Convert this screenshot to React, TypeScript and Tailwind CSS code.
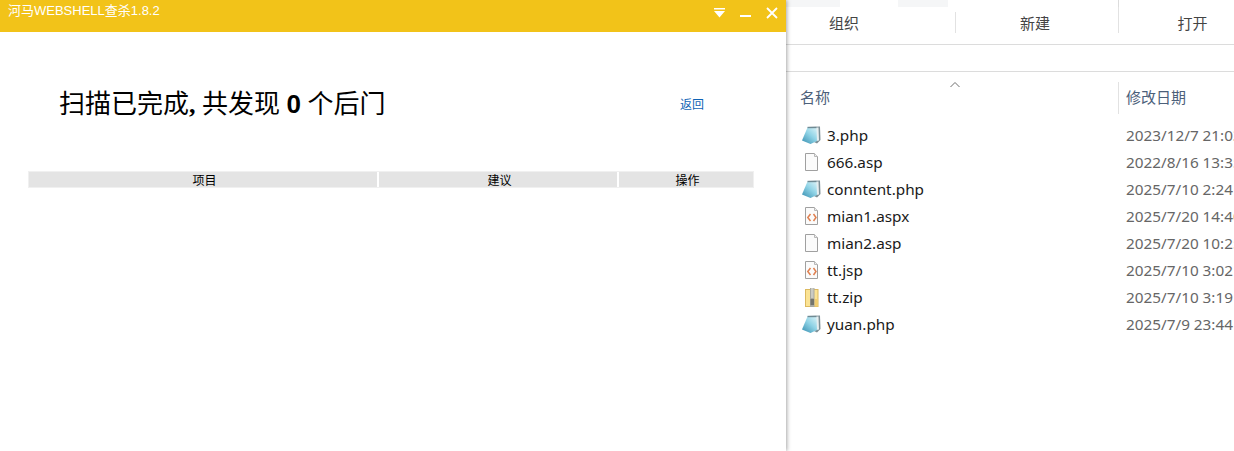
const files = [
  { name: "3.php", date: "2023/12/7 21:03", type: "php" },
  { name: "666.asp", date: "2022/8/16 13:35", type: "blank" },
  { name: "conntent.php", date: "2025/7/10 2:24", type: "php" },
  { name: "mian1.aspx", date: "2025/7/20 14:40", type: "code" },
  { name: "mian2.asp", date: "2025/7/20 10:25", type: "blank" },
  { name: "tt.jsp", date: "2025/7/10 3:02", type: "code" },
  { name: "tt.zip", date: "2025/7/10 3:19", type: "zip" },
  { name: "yuan.php", date: "2025/7/9 23:44", type: "php" },
];

function FileIcon({ type }: { type: string }) {
  if (type === "php") {
    return (
      <svg width="21" height="20" viewBox="0 0 21 20" className="mr-[-1px]">
        <defs>
          <linearGradient id="phpPage" x1="0.1" y1="1" x2="0.9" y2="0">
            <stop offset="0" stopColor="#3d93b4" />
            <stop offset="0.55" stopColor="#8fd3e6" />
            <stop offset="1" stopColor="#d4f0f6" />
          </linearGradient>
        </defs>
        <path d="M8 1 L20 0.5 L20.5 14 L17 17.5 L13 15.5 Z" fill="#7d8f96" />
        <path d="M8 2 L18.5 1.5 L19 14.5 L14 15.5 Z" fill="#e6eef0" />
        <path d="M7.5 1.5 L16.5 1.5 L17 15 L10.5 18 L2 14.5 Z" fill="url(#phpPage)" />
        <path d="M7.5 1.5 L16.5 1.5" stroke="#6f8a94" strokeWidth="1.4" />
      </svg>
    );
  }
  if (type === "zip") {
    return (
      <svg width="20" height="20" viewBox="0 0 20 20">
        <rect x="5.5" y="1.5" width="12.5" height="17" fill="#fbe394" stroke="#dcb95f" />
        <rect x="14" y="11" width="4" height="7.5" fill="#f1ce72" />
        <rect x="10" y="0" width="4.5" height="19" fill="#a9a9a0" />
        <path d="M11 1 H13.5 M11 3 H13.5 M11 5 H13.5 M11 7 H13.5 M11 9 H13.5" stroke="#ecece6" strokeWidth="1" />
        <rect x="10.5" y="11" width="3.5" height="6" fill="#74746c" />
      </svg>
    );
  }
  return (
    <svg width="20" height="20" viewBox="0 0 20 20">
      <path d="M5.5 0.5 H14.5 L17.5 3.5 V17.5 H5.5 Z" fill="#fbfbfb" stroke="#a0a0a0" />
      <path d="M14.5 0.5 V3.5 H17.5" fill="#eeeeee" stroke="#b8b8b8" />
      {type === "code" && (
        <path d="M10.5 7 L7.8 10.5 L10.5 14 M13.5 7 L16 10.5 L13.5 14" fill="none" stroke="#e08050" strokeWidth="1.5" />
      )}
    </svg>
  );
}

export default function App() {
  return (
    <div className="flex h-[451px] w-[1234px] overflow-hidden bg-white">
      <div className="relative z-10 w-[786px] shrink-0 bg-white shadow-[1px_0_4px_rgba(0,0,0,0.35)]">
        <div className="flex h-8 items-start justify-between bg-[#f2c319] pl-2 pr-2 font-['Liberation_Sans','Noto_Sans_CJK_SC',sans-serif] text-[13px] text-white">
          <span className="pt-[3px] leading-4">河马WEBSHELL查杀1.8.2</span>
          <div className="flex items-center gap-[15px] pt-[7px]">
            <svg width="12" height="10" viewBox="0 0 12 10">
              <path d="M1 0 H12 V1.6 H1 Z M1 3 H12 L6.5 9.5 Z" fill="#fff" />
            </svg>
            <span className="mt-[5px] block h-[2px] w-[11px] bg-white" />
            <svg width="12" height="12" viewBox="0 0 12 12">
              <path d="M1 1 L11 11 M11 1 L1 11" stroke="#fff" strokeWidth="1.8" />
            </svg>
          </div>
        </div>
        <div className="flex items-center justify-between pl-[59px] pr-[82px] pt-[56px]">
          <h1 className="font-['Liberation_Serif','Noto_Sans_CJK_SC',serif] text-[26px] leading-8 font-normal text-black">
            扫描已完成<span className="font-bold">,</span> 共发现{" "}
            <span className="font-['Liberation_Sans',sans-serif] font-bold">0</span> 个后门
          </h1>
          <a className="mb-[1px] font-['Noto_Sans_CJK_SC',sans-serif] text-xs text-[#0f63b5]">返回</a>
        </div>
        <div className="mx-7 mt-[50px] flex w-[726px] gap-[2px] border border-[#f0f0f0] bg-white font-['Noto_Sans_CJK_SC',sans-serif] text-xs leading-[15px] text-black">
          <div className="w-[348px] bg-[#e4e4e4] pl-[3px] text-center">项目</div>
          <div className="w-[238px] bg-[#e4e4e4] pl-[3px] text-center">建议</div>
          <div className="flex-1 bg-[#e4e4e4] pl-[3px] text-center">操作</div>
        </div>
      </div>

      <div className="min-w-0 flex-1 overflow-hidden font-['Noto_Sans','Noto_Sans_CJK_SC',sans-serif] text-[15.3px]">
        <div className="flex h-[7px]">
          <div className="w-[54px] bg-[#f5f6f7]" />
          <div className="ml-[58px] w-[50px] bg-[#f5f6f7]" />
          <div className="ml-[170px] w-px bg-[#dcdcdc]" />
        </div>
        <div className="flex h-[38px] border-b border-[#dcdcdc] text-[15px] text-[#444]">
          <div className="flex h-[27px] w-[169px] shrink-0 items-center justify-center pt-[6px] pr-[53px]">组织</div>
          <div className="mt-[5px] flex h-[21px] w-[163px] shrink-0 items-center justify-center border-l border-[#e2e2e2] pt-[2px] pr-[4px]">新建</div>
          <div className="flex h-[26px] w-[150px] shrink-0 items-center justify-center border-l border-[#e2e2e2] pt-[6px] pr-[2px]">打开</div>
        </div>
        <div className="h-[27px] border-b border-[#dcdcdc]" />
        <div className="flex h-[41px] items-center pt-[10px] text-[15px] text-[#4c607a]">
          <div className="relative w-[332px] shrink-0 pl-[14px]">
            名称
            <svg className="absolute left-[163px] top-[-5px]" width="12" height="8" viewBox="0 0 12 8">
              <path d="M1.5 6 L6 1.5 L10.5 6" fill="none" stroke="#6f6f6f" />
            </svg>
          </div>
          <div className="flex h-8 items-center border-l border-[#e2e2e2] pl-[7px] whitespace-nowrap">修改日期</div>
        </div>
        <div className="mt-[9px]">
          {files.map((f) => (
            <div key={f.name} className="flex h-[27px] items-center whitespace-nowrap">
              <div className="flex w-[333px] shrink-0 items-center gap-[7px] pl-[14px] text-[#1a1a1a]">
                <FileIcon type={f.type} />
                <span>{f.name}</span>
              </div>
              <div className="pl-[7px] text-[#666]">{f.date}</div>
            </div>
          ))}
        </div>
      </div>
    </div>
  );
}
